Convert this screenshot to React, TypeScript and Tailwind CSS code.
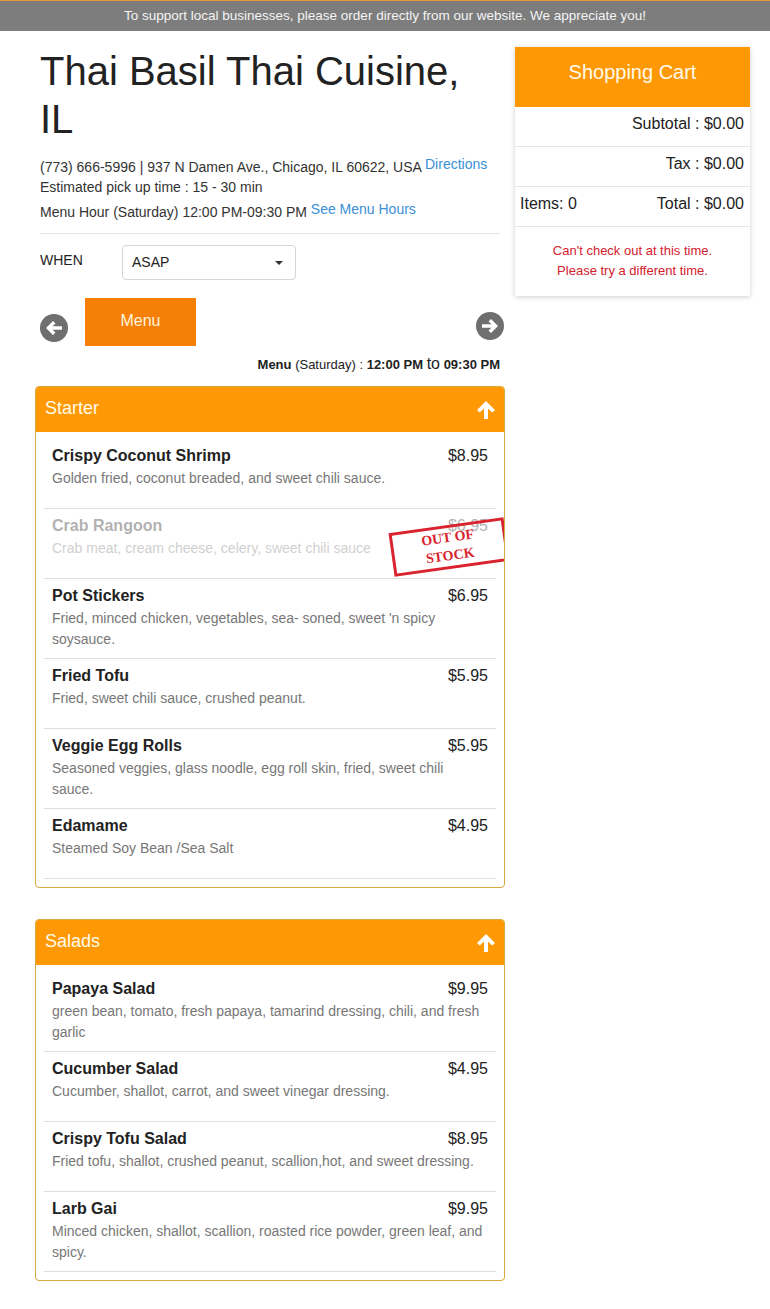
import React from "react";

type Item = { name: string; price: string; desc: string; out?: boolean };

const SECTIONS: { title: string; items: Item[] }[] = [
  {
    title: "Starter",
    items: [
      { name: "Crispy Coconut Shrimp", price: "$8.95", desc: "Golden fried, coconut breaded, and sweet chili sauce." },
      { name: "Crab Rangoon", price: "$6.95", desc: "Crab meat, cream cheese, celery, sweet chili sauce", out: true },
      { name: "Pot Stickers", price: "$6.95", desc: "Fried, minced chicken, vegetables, sea- soned, sweet 'n spicy soysauce." },
      { name: "Fried Tofu", price: "$5.95", desc: "Fried, sweet chili sauce, crushed peanut." },
      { name: "Veggie Egg Rolls", price: "$5.95", desc: "Seasoned veggies, glass noodle, egg roll skin, fried, sweet chili sauce." },
      { name: "Edamame", price: "$4.95", desc: "Steamed Soy Bean /Sea Salt" },
    ],
  },
  {
    title: "Salads",
    items: [
      { name: "Papaya Salad", price: "$9.95", desc: "green bean, tomato, fresh papaya, tamarind dressing, chili, and fresh garlic" },
      { name: "Cucumber Salad", price: "$4.95", desc: "Cucumber, shallot, carrot, and sweet vinegar dressing." },
      { name: "Crispy Tofu Salad", price: "$8.95", desc: "Fried tofu, shallot, crushed peanut, scallion,hot, and sweet dressing." },
      { name: "Larb Gai", price: "$9.95", desc: "Minced chicken, shallot, scallion, roasted rice powder, green leaf, and spicy." },
    ],
  },
];

function CircleArrow({ dir }: { dir: "left" | "right" }) {
  return (
    <svg width="28" height="28" viewBox="0 0 28 28" className={dir === "left" ? "" : "rotate-180"}>
      <circle cx="14" cy="14" r="14" fill="#6f6f6f" />
      <path d="M6 14 L13 7 L15.5 9.5 L12.5 12.3 L22 12.3 L22 15.7 L12.5 15.7 L15.5 18.5 L13 21 Z" fill="#fff" />
    </svg>
  );
}

function UpArrow() {
  return (
    <svg width="20" height="20" viewBox="0 0 20 20">
      <path d="M10 1 L19 10 L16.2 12.6 L12 8.4 L12 19 L8 19 L8 8.4 L3.8 12.6 L1 10 Z" fill="#fff" />
    </svg>
  );
}

function MenuRow({ item }: { item: Item }) {
  return (
    <div className="relative border-b border-[#dddddd]">
      <div className={`min-h-[69px] px-2 pt-[6px] pb-[8px] ${item.out ? "opacity-35" : ""}`}>
        <div className="flex justify-between text-[16px] leading-[22px] text-[#222]">
          <span className="font-bold">{item.name}</span>
          <span>{item.price}</span>
        </div>
        <div className="mt-[1px] text-[14px] leading-[21px] text-[#777]">{item.desc}</div>
      </div>
      {item.out && (
        <div className="absolute right-[-11px] top-[16px] flex h-[44px] w-[116px] rotate-[-8deg] flex-col items-center justify-center border-[3px] border-[#d9232e] font-['Liberation_Serif',serif] text-[14px] font-bold leading-[18px] text-[#d9232e]">
          <span>OUT OF</span>
          <span>STOCK</span>
        </div>
      )}
    </div>
  );
}

function Section({ title, items }: { title: string; items: Item[] }) {
  return (
    <div className="mb-[31px] overflow-hidden rounded-[4px] border border-[#d8a93c]">
      <div className="flex h-[45px] items-center justify-between bg-[#ff9805] pl-[9px] pr-[8px]">
        <span className="pb-[3px] text-[18px] text-[#fffbe8]">{title}</span>
        <UpArrow />
      </div>
      <div className="px-2 pt-[7px] pb-2">
        {items.map((it) => (
          <MenuRow key={it.name} item={it} />
        ))}
      </div>
    </div>
  );
}

export default function App() {
  return (
    <div className="min-h-[1309px] bg-white font-['Liberation_Sans',Arial,sans-serif] text-[#333]">
      {/* top banner */}
      <div className="flex h-[31px] items-center justify-center border-t border-[#e69a3a] bg-[#7d7d7d] text-[13.5px] text-[#f4f4f4]">
        To support local businesses, please order directly from our website. We appreciate you!
      </div>

      <div className="flex gap-[10px] pl-[35px] pr-[20px] pt-4">
        {/* left column */}
        <div className="w-[470px]">
          <div className="px-[5px]">
            <h1 className="text-[40px] leading-[48px] text-[#222]">Thai Basil Thai Cuisine, IL</h1>
            <div className="mt-[13px] text-[14px] leading-[22px] text-[#333]">
              <div className="h-[20px]">
                (773) 666-5996 | 937 N Damen Ave., Chicago, IL 60622, USA{" "}
                <span className="relative top-[-3px] text-[#3a8fd6]">Directions</span>
              </div>
              <div className="h-[22px]">Estimated pick up time : 15 - 30 min</div>
              <div className="mt-[3px] h-[22px]">
                Menu Hour (Saturday) 12:00 PM-09:30 PM{" "}
                <span className="relative top-[-3px] text-[#3a8fd6]">See Menu Hours</span>
              </div>
            </div>
            <div className="mt-[10px] border-t border-[#e5e5e5]" />

            <div className="mt-[11px] flex items-center">
              <span className="w-[82px] pb-[5px] text-[14px] text-[#222]">WHEN</span>
              <div className="flex h-[35px] w-[174px] items-center justify-between rounded-[4px] border border-[#d5d5d5] pl-[9px] pr-[12px] text-[14px] text-[#222]">
                <span>ASAP</span>
                <span className="h-0 w-0 border-x-[4px] border-t-[4px] border-x-transparent border-t-[#333]" />
              </div>
            </div>

            <div className="mt-[18px] flex items-center justify-between">
              <div className="flex items-center">
                <div className="mt-[11px]">
                  <CircleArrow dir="left" />
                </div>
                <div className="ml-[17px] flex h-[48px] w-[111px] items-center justify-center bg-[#f57f07] pb-[2px] text-[16px] text-[#fff3dc]">
                  Menu
                </div>
              </div>
              <div className="mt-[7px] mr-[-4px]">
                <CircleArrow dir="right" />
              </div>
            </div>

            <div className="mt-[6px] text-right text-[13px] text-[#222]">
              <span className="font-bold">Menu</span> (Saturday) : <span className="font-bold">12:00 PM</span>{" "}
              <span className="text-[16px]">to</span> <span className="font-bold">09:30 PM</span>
            </div>
          </div>

          <div className="mt-[10px]">
            {SECTIONS.map((s) => (
              <Section key={s.title} title={s.title} items={s.items} />
            ))}
          </div>
        </div>

        {/* cart */}
        <div className="w-[235px]">
          <div className="bg-white shadow-[0_1px_5px_rgba(0,0,0,0.2)]">
            <div className="h-[60px] pt-[10px] bg-[#ff9805] text-center text-[20px] text-[#fffbe8]">Shopping Cart</div>
            <div className="h-[40px] border-b border-[#e5e5e5] px-[6px] pt-[6px] text-right text-[16px] leading-[22px] text-[#222]">
              Subtotal : $0.00
            </div>
            <div className="h-[40px] border-b border-[#e5e5e5] px-[6px] pt-[6px] text-right text-[16px] leading-[22px] text-[#222]">
              Tax : $0.00
            </div>
            <div className="flex h-[40px] justify-between border-b border-[#e5e5e5] pl-[5px] pr-[6px] pt-[6px] text-[16px] leading-[22px] text-[#222]">
              <span>Items: 0</span>
              <span>Total : $0.00</span>
            </div>
            <div className="pt-[14px] pb-[15px] text-center text-[13px] leading-[20px] text-[#d4202c]">
              <div>Can't check out at this time.</div>
              <div>Please try a different time.</div>
            </div>
          </div>
        </div>
      </div>
    </div>
  );
}
